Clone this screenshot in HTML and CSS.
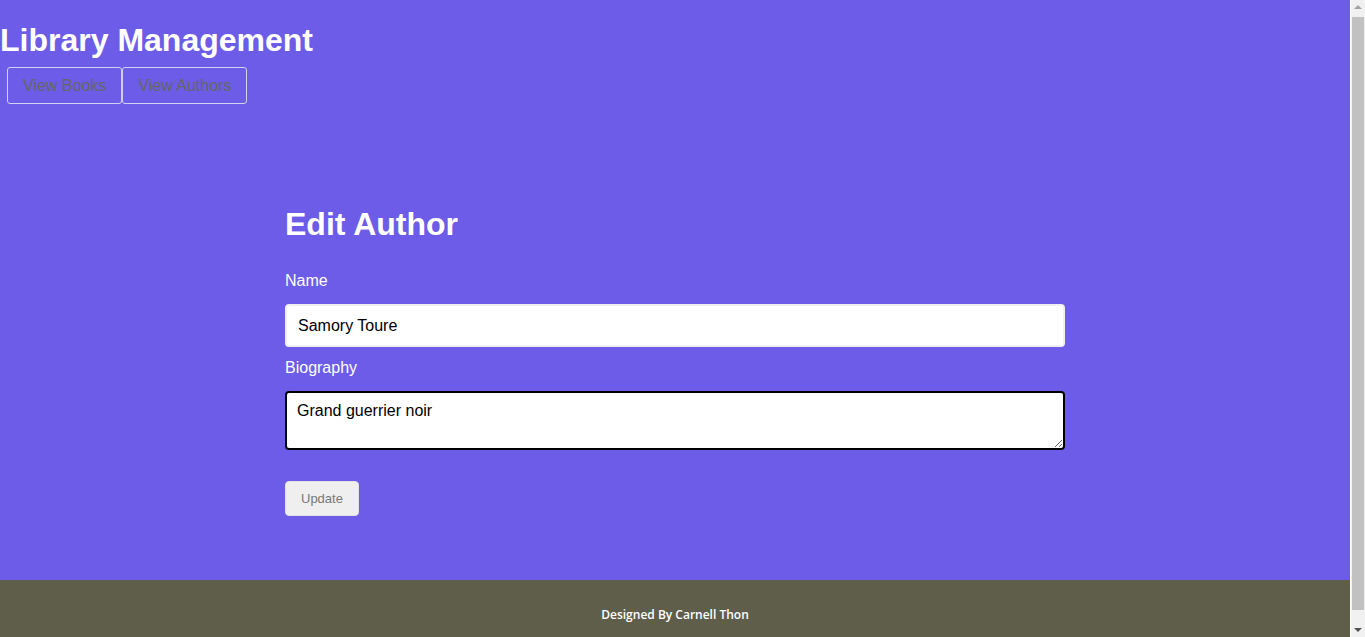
FILE: index.html
```html
<!DOCTYPE html>
<html lang="en">
<head>
<meta charset="utf-8">
<title>Library Management</title>
<link rel="stylesheet" href="styles.css">
</head>
<body>
<header class="site-header">
  <h1 class="site-title">Library Management</h1>
  <nav class="nav">
    <button class="nav-btn" type="button">View Books</button>
    <button class="nav-btn" type="button">View Authors</button>
  </nav>
</header>
<main class="main">
  <form class="form">
    <h2 class="form-title">Edit Author</h2>
    <label class="label" for="name">Name</label>
    <input class="input" id="name" type="text" value="Samory Toure">
    <label class="label" for="bio">Biography</label>
    <textarea class="textarea" id="bio">Grand guerrier noir</textarea>
    <div class="actions">
      <button class="update-btn" type="button">Update</button>
    </div>
  </form>
</main>
<footer class="footer">
  <p class="footer-text">Designed By Carnell Thon</p>
</footer>
<div class="scrollbar" aria-hidden="true">
  <span class="sb-arrow sb-up"></span>
  <span class="sb-thumb"></span>
  <span class="sb-arrow sb-down"></span>
</div>
</body>
</html>
```
FILE: styles.css
```css
html, body {
  margin: 0;
  padding: 0;
}
html {
  background: #6c5ce7;
}
body {
  margin-right: 15px;
  background: #6c5ce7;
  font-family: "Liberation Sans", Arial, sans-serif;
  color: #fff;
}
.site-header {
  display: flex;
  flex-direction: column;
}
.site-title {
  margin: 22px 0 8px;
  font-size: 32px;
  font-weight: bold;
  line-height: 37px;
  color: #fff;
}
.nav {
  display: flex;
  padding-left: 7px;
}
.nav-btn {
  height: 37px;
  padding: 0 15px;
  background: transparent;
  border: 1px solid #d4d0f0;
  border-radius: 3px;
  color: #666;
  font-family: "Liberation Sans", Arial, sans-serif;
  font-size: 16px;
}
.main {
  padding: 102px 0 64px;
}
.form {
  width: 780px;
  margin: 0 auto;
  display: flex;
  flex-direction: column;
}
.form-title {
  margin: 0 0 29px;
  font-size: 32px;
  line-height: 37px;
  font-weight: bold;
}
.label {
  display: block;
  font-size: 16px;
  line-height: 18px;
  margin-bottom: 14px;
}
.input {
  box-sizing: border-box;
  height: 43px;
  padding: 0 11px;
  border: 2px solid #f0f0f0;
  border-radius: 4px;
  background: #fff;
  font-family: "Liberation Sans", Arial, sans-serif;
  font-size: 16px;
  color: #000;
  margin: 0 0 12px;
}
.textarea {
  box-sizing: border-box;
  height: 59px;
  padding: 9px 10px;
  border: 2px solid #000;
  border-radius: 4px;
  background: #fff;
  font-family: "Liberation Sans", Arial, sans-serif;
  font-size: 16px;
  line-height: 18px;
  color: #000;
  margin: 0 0 31px;
  outline: none;
}
.actions {
  display: flex;
}
.update-btn {
  height: 35px;
  padding: 0 15px;
  background: #efefef;
  border: 1px solid #e2e2e2;
  border-radius: 4px;
  color: #777;
  font-family: "Liberation Sans", Arial, sans-serif;
  font-size: 13px;
}
.footer {
  background: #5e5e4a;
  height: 68px;
  display: flex;
  align-items: center;
  justify-content: center;
}
.footer-text {
  margin: 0;
  font-family: "Open Sans", sans-serif;
  font-size: 12px;
  font-weight: 600;
  color: #fff;
}
.scrollbar {
  position: fixed;
  top: 0;
  right: 0;
  bottom: 0;
  width: 15px;
  background: #f1f1f1;
  border-left: 1px solid #fff;
  box-sizing: border-box;
  display: flex;
  flex-direction: column;
  align-items: center;
}
.sb-arrow {
  width: 0;
  height: 0;
  border-left: 4px solid transparent;
  border-right: 4px solid transparent;
}
.sb-up {
  margin-top: 5px;
  border-bottom: 4px solid #a3a3a3;
}
.sb-thumb {
  width: 12px;
  margin-top: 8px;
  height: 593px;
  background: #c1c1c1;
}
.sb-down {
  margin-top: auto;
  margin-bottom: 5px;
  border-top: 4px solid #505050;
}
```
